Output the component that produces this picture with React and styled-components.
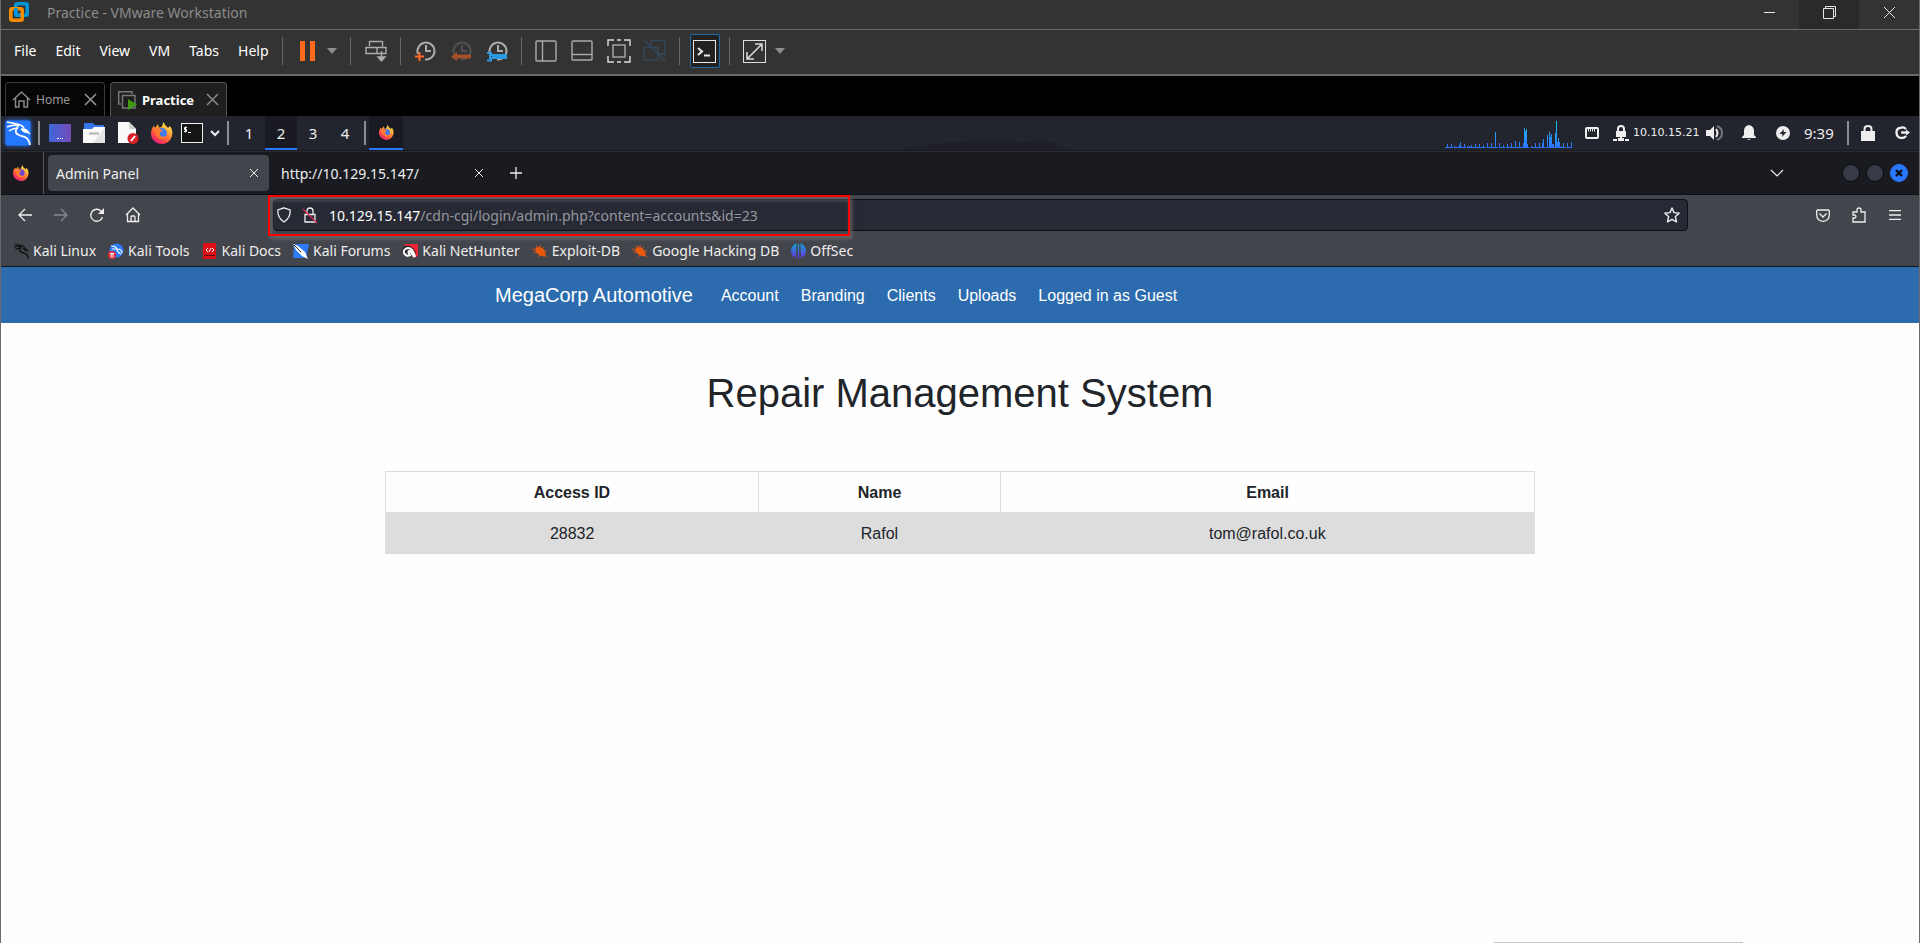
import React from "react";
import styled, { createGlobalStyle, css } from "styled-components";

const ui = '"Noto Sans", "Open Sans", sans-serif';
const page = '"Liberation Sans", Arial, sans-serif';

const GlobalStyle = createGlobalStyle`
  *, *::before, *::after { box-sizing: border-box; }
  body { margin: 0; background: #fefefe; overflow-x: hidden; }
  button, input { border: 0; padding: 0; margin: 0; background: none; color: inherit; font: inherit; }
  a { color: inherit; text-decoration: none; }
  svg { display: block; flex: none; overflow: visible; }
`;

const Window = styled.div`
  display: flex;
  flex-direction: column;
  min-height: 100vh;
  border: solid #6a6a6a;
  border-width: 0 1px;
  font-family: ${ui};
`;

const Spacer = styled.div`flex: 1;`;

/* ---------- VMware window ---------- */
const TitleBar = styled.header`
  display: flex;
  align-items: stretch;
  height: 30px;
  padding-left: 6px;
  background: #333;
  border-bottom: 1px solid #6b6b6b;
  color: #8c8c8c;
  font-size: 14px;
  line-height: 26px;
`;
const TitleText = styled.span`padding-left: 18px;`;
const Caption = styled.button`
  width: 60px;
  padding-bottom: 4px;
  background: ${(p) => (p.$on ? "#2a2a2a" : "none")};
  color: #e6e6e6;
  display: flex;
  align-items: center;
  justify-content: center;
`;
const MenuBar = styled.div`
  display: flex;
  align-items: center;
  height: 46px;
  padding: 0 4px 2px;
  background: #333;
  border-bottom: 2px solid #6b6b6b;
  color: #fff;
  font-size: 14px;
`;
const Menus = styled.div`display: flex; gap: 1px; margin-right: 4px;`;
const MenuItem = styled.button`padding: 0 9px; line-height: 20px;`;
const Divider = styled.span`
  width: 1px;
  height: 28px;
  margin: 0 ${(p) => p.$r}px 0 ${(p) => p.$l}px;
  background: #666;
`;
const Tool = styled.button`
  display: flex;
  align-items: center;
  justify-content: center;
  width: ${(p) => p.$w || 22}px;
  height: 34px;
  margin-right: ${(p) => p.$mr || 0}px;
  color: #ababab;
  ${(p) => p.$on && css`background: #222; border: 1px solid #1f6aa8; border-radius: 2px; color: #e8e8e8;`}
`;
const VmTabs = styled.nav`
  display: flex;
  align-items: flex-end;
  gap: 5px;
  height: 40px;
  padding-left: 4px;
  background: #000;
`;
const VmTab = styled.div`
  display: flex;
  align-items: center;
  gap: 6px;
  width: ${(p) => p.$w}px;
  height: 34px;
  padding: 0 8px 0 7px;
  border: 1px solid ${(p) => (p.$on ? "#555" : "#3a3a3a")};
  border-bottom: 0;
  border-radius: 4px 4px 0 0;
  background: ${(p) => (p.$on ? "#1f1f1f" : "#060606")};
  color: ${(p) => (p.$on ? "#fff" : "#9a9a9a")};
  font-size: ${(p) => (p.$on ? 13 : 12)}px;
  font-weight: ${(p) => (p.$on ? 700 : 400)};
`;
const VmLabel = styled.button`flex: 1; text-align: left;`;

/* ---------- Kali panel ---------- */
const Panel = styled.div`
  position: relative;
  display: flex;
  align-items: center;
  height: 36px;
  padding: 0 9px 2px 4px;
  background: #23252e;
  border-bottom: 1px solid #2b2c30;
  box-shadow: inset 0 -1px #191a1f;
  color: #eee;
  font-size: 15px;
`;
const Wallpaper = styled.svg`
  position: absolute;
  bottom: 1px;
  left: 47%;
`;
const Launcher = styled.button`
  display: flex;
  justify-content: center;
  width: ${(p) => p.$w || 24}px;
  margin-right: ${(p) => p.$mr || 0}px;
`;
const PanelRule = styled.span`
  width: 2px;
  height: 24px;
  margin: 0 ${(p) => p.$r}px 0 ${(p) => p.$l}px;
  background: #8d8e92;
`;
const Workspace = styled.button`
  display: flex;
  align-items: center;
  justify-content: center;
  width: ${(p) => p.$w || 32}px;
  height: 34px;
  border-top: 2px solid transparent;
  border-bottom: 2px solid ${(p) => (p.$on ? "#2777ff" : "transparent")};
  background: ${(p) => (p.$on ? "#1a1b22" : "none")};
`;
const Address = styled.span`
  font-family: "DejaVu Sans", sans-serif;
  font-size: 11px;
  width: 72px;
  white-space: nowrap;
`;
const Clock = styled.time`width: 43px;`;

/* ---------- Firefox ---------- */
const TabStrip = styled.div`
  display: flex;
  align-items: center;
  height: 43px;
  background: #1a1b20;
  border-bottom: 1px solid #0e0f12;
  color: #eee;
  font-size: 14px;
`;
const ViewButton = styled.button`
  display: flex;
  align-items: center;
  justify-content: center;
  width: 43px;
  height: 42px;
  padding-right: 2px;
  margin-right: 4px;
  border-right: 1px solid #55565b;
`;
const BrowserTab = styled.div`
  display: flex;
  align-items: center;
  width: ${(p) => p.$w}px;
  height: 36px;
  padding: 0 11px 0 ${(p) => (p.$on ? 8 : 12)}px;
  border-radius: 4px;
  background: ${(p) => (p.$on ? "#43454c" : "none")};
`;
const TabLabel = styled.button`flex: 1; text-align: left; white-space: nowrap;`;
const NewTab = styled.button`display: flex; padding-left: 16px;`;
const AllTabs = styled.button`display: flex; padding: 0 2px; margin-right: 57px;`;
const WindowDot = styled.button`
  width: 18px;
  height: 18px;
  margin-right: ${(p) => (p.$close ? 11 : 6)}px;
  border-radius: 50%;
  border: 1px solid ${(p) => (p.$close ? "#2777ff" : "#0b0c0f")};
  background: ${(p) => (p.$close ? "#2777ff" : "#373b47")};
  display: flex;
  align-items: center;
  justify-content: center;
`;
const NavBar = styled.div`
  display: flex;
  align-items: center;
  height: 40px;
  padding: 0 16px;
  background: #43454c;
  color: #eee;
`;
const NavButton = styled.button`
  display: flex;
  justify-content: center;
  width: 16px;
  margin-right: ${(p) => (p.$last ? 0 : 20)}px;
  opacity: ${(p) => (p.$dim ? 0.4 : 1)};
`;
const UrlBar = styled.div`
  position: relative;
  flex: 1;
  display: flex;
  align-items: center;
  height: 32px;
  margin: 0 127px 0 132px;
  padding: 0 7px 0 3px;
  border: 1px solid #0e0f14;
  border-radius: 4px;
  background: #272935;
  gap: 11px;
  font-size: 14px;
`;
const UrlText = styled.label`flex: 1; display: flex; color: #fff; white-space: nowrap;`;
const UrlPath = styled.input`flex: 1; min-width: 0; color: #96979d; outline: 0;`;
const RedFrame = styled.span`
  position: absolute;
  top: -5px;
  left: -6px;
  width: 582px;
  height: 41px;
  border: 2px solid #f00;
  box-shadow: 2px 3px 4px rgba(110, 110, 110, 0.8), inset 2px 3px 4px rgba(110, 110, 110, 0.8);
  pointer-events: none;
`;
const Bookmarks = styled.nav`
  display: flex;
  align-items: center;
  gap: 12px;
  height: 32px;
  padding: 0 12px;
  background: #43454c;
  border-bottom: 1px solid #14151a;
  color: #eee;
  font-size: 14px;
`;
const Bookmark = styled.a`display: flex; align-items: center; gap: 4px; white-space: nowrap;`;

/* ---------- Web page ---------- */
const SiteNav = styled.nav`
  display: flex;
  justify-content: center;
  height: 56px;
  background: #2c6cae;
  color: #fff;
  font: 16px/24px ${page};
`;
const SiteInner = styled.div`
  display: flex;
  align-items: center;
  width: 100%;
  max-width: 930px;
  gap: 22px;
`;
const Brand = styled.a`font-size: 20px; margin-right: 6px;`;
const SiteLink = styled.a`padding-top: 2px;`;
const Main = styled.main`
  flex: 1;
  display: flex;
  flex-direction: column;
  align-items: center;
  background: #fefefe;
  color: #212529;
  font: 16px/24px ${page};
`;
const Heading = styled.h1`margin: 46px 0 54px; font-size: 40px; line-height: 48px; font-weight: 500;`;
const Table = styled.table`
  width: 60%;
  border-collapse: collapse;
  text-align: center;
  th, td { padding: 9px 8px 7px; }
  th { border: 1px solid #ddd; }
  td { background: #ddd; }
  tbody { border: 1px solid #ddd; }
`;
const Column = styled.col`width: ${(p) => p.$w};`;
const Toast = styled.aside`
  width: 249px;
  height: 1px;
  margin: auto 176px 0 auto;
  background: #c4c4c4;
`;

/* ---------- Icons ---------- */
const Svg = ({ w = 16, h, sw = 1, children, ...rest }) => (
  <svg width={w} height={h || w} viewBox={`0 0 ${w} ${h || w}`} fill="none" stroke="currentColor" strokeWidth={sw} aria-hidden="true" {...rest}>{children}</svg>
);
const Cross = ({ s = 8, sw = 1, color = "currentColor" }) => (
  <Svg w={s} sw={sw} stroke={color}><path d={`M0 0L${s} ${s}M${s} 0L0 ${s}`} /></Svg>
);
const Caret = () => <Svg w={10} h={6} stroke="none" fill="#8c8c8c"><path d="M0 0H10L5 6z" /></Svg>;
const Chevron = ({ w = 12, sw = 1.2 }) => <Svg w={w} h={w / 2} sw={sw}><path d={`M0 0L${w / 2} ${w / 2}L${w} 0`} /></Svg>;

const VmLogo = () => (
  <Svg w={22} h={24} sw={3.6}>
    <rect x="8.800" y="3.800" width="11.400" height="11.400" rx="1.500" stroke="#0096d6" />
    <rect x="3.800" y="8.800" width="11.400" height="11.400" rx="1.500" stroke="#f38b00" />
    <path d="M8.800 8V13.700Q8.800 15.200 10.300 15.200H13" stroke="#0096d6" />
  </Svg>
);

const FirefoxIcon = ({ s = 22, id }) => (
  <svg width={s} height={s} viewBox="0 0 22 22" aria-hidden="true">
    <defs>
      <linearGradient id={id} x1="0.85" y1="0.05" x2="0.25" y2="1">
        <stop offset="0" stopColor="#fff44f" />
        <stop offset="0.35" stopColor="#ffa436" />
        <stop offset="0.7" stopColor="#ff4f3e" />
        <stop offset="1" stopColor="#e31587" />
      </linearGradient>
    </defs>
    <path d="M13 0C13 3 16 4 17 6L19 4C21 7 22 10 21 14C19.500 19 15.500 22 11 22C5 22 0 17.500 0 11.500C0 8 1.500 5 3 3.500L4 6L7 2L8 5.500Q11 6 11.500 3Q11.700 1 13 0z" fill={`url(#${id})`} />
    <circle cx="11" cy="11" r="5" fill={s !== 16 ? "#3f7cf0" : "#6a46d8"} />
    <path d="M4 7Q7 5.500 9 7.500L12 8Q11 10 9 10Q8 13 11 14.500Q14 15.500 16 13Q14 18 9.500 17Q4 15 4 7z" fill="#ff7a30" />
  </svg>
);

const Dragon = ({ s = 26, color = "#fff", tile }) => (
  <svg width={s} height={s} viewBox="0 0 26 26" fill="none" aria-hidden="true">
    {tile && <rect x="0.500" y="0.500" width="25" height="25" rx="2" fill="#2478ff" style={{ filter: "drop-shadow(0 0 2px #2478ff)" }} />}
    <g stroke={color} strokeLinejoin="round" strokeWidth={tile ? 1.4 : 2}>
      <path d="M2 2L12 4Q17 5 19 8M2 7Q8 4 14 6M4 11Q8 8 13 8" />
      <path d="M13 7Q9 11 12 14Q15 16 20 17Q24 19 25 25" strokeWidth={tile ? 1.8 : 2.4} />
      <path d="M16 9Q20 8 22 10L25 14L22 12.500L19 12Q17 11 16 9z" fill={color} strokeWidth="1" />
    </g>
  </svg>
);

const SystemGraph = () => {
  const spikes = [[2,3],[6,3],[9,1],[14,2],[15,5],[19,3],[22,1],[24,1],[26,2],[30,3],[34,3],[38,2],[42,4],[46,4],[50,15],[54,4],[58,2],[62,3],[66,4],[70,6],[74,5],[78,4],[79,19],[80,16],[81,18],[82,3],[86,1],[90,4],[94,4],[97,4],[98,8],[102,12],[104,15],[105,10],[106,13],[107,3],[108,3],[110,14],[111,26],[112,5],[113,9],[114,5],[116,1],[118,4],[122,4],[126,5]];
  return (
    <svg width="128" height="30" viewBox="0 0 128 30" aria-hidden="true">
      <defs><linearGradient id="load" gradientUnits="userSpaceOnUse" x1="0" y1="2" x2="0" y2="30"><stop stopColor="#1fc8e8" /><stop offset="1" stopColor="#2b72ff" /></linearGradient></defs>
      <path d="M0 29H8V30H0zM10 29H21V30H10zM23 29H41V30H23zM43 29H53V30H43zM54 29H60V30H54zM61 29H84V30H61zM86 29H100V30H86zM101 29H121V30H101zM122 29H127V30H122z" fill="url(#load)" />
      <g fill="url(#load)">{spikes.map(([x, h]) => <rect key={x} x={x} y={29 - h} width="1" height={h + 1} />)}</g>
    </svg>
  );
};

const ClockIcon = ({ dim, children }) => (
  <Svg w={22} sw={2}>
    <path d="M4 14A8.500 8.500 0 1 1 11 19.500" opacity={dim ? 0.25 : 1} />
    <path d="M12 5V11H17" opacity={dim ? 0.25 : 1} />
    {children}
  </Svg>
);

const Bug = () => (
  <Svg stroke="#e8590c" sw={0.8}><path d="M4 5Q8 3 11 6Q14 10 13 13Q7 13 4 9z" fill="#e8590c" /><path d="M0 6L5 7M4 2L6 5M8 2V5M1 9L5 9M6 14L8 12M12 4L10 6M15 8H12M15 14L12 12" /></Svg>
);

const bookmarks = [
  ["Kali Linux", <Dragon s={16} color="#111" />],
  ["Kali Tools", <svg width="16" height="16" viewBox="0 0 16 16"><circle cx="8.500" cy="7.500" r="7" fill="#2d7cf6" /><path d="M3 3Q8 3 9 6Q14 6 14 10M4 6L9 6Q9 9 13 11" fill="none" stroke="#fff" strokeWidth="1.200" /><circle cx="4" cy="12" r="4" fill="#e02a38" /><path d="M2 10.500H6M3.200 10.500V14.500M5 10.500V14.500" stroke="#fff" /></svg>],
  ["Kali Docs", <svg width="16" height="16" viewBox="0 0 16 16"><rect x="1" width="13" height="16" rx="1" fill="#df0f18" /><path d="M2 12.500H13" stroke="#540b0e" /><path d="M6 5L4 7L6 9M7 9L9 5M10 5L12 7L10 9" fill="none" stroke="#fff" /></svg>],
  ["Kali Forums", <svg width="16" height="16" viewBox="0 0 16 16"><path d="M1 1H16L13 15H0z" fill="#2d7cf6" /><path d="M0 1L5 3L12 9L15 16L9 13L3 7z" fill="#fff" /><path d="M1 2L8 9" stroke="#222" /></svg>],
  ["Kali NetHunter", <svg width="16" height="16" viewBox="0 0 16 16"><path d="M2 1H16V13L12 15z" fill="#ee2436" /><path d="M2 10Q2 4 7 5Q10 6 12 11" fill="none" stroke="#222" strokeWidth="4" /><path d="M13 14Q11 5 6 5Q1 6 2 10Q4 14 8 12Q5 8 8 8Q10 10 12 14" fill="none" stroke="#fff" strokeWidth="2" /></svg>],
  ["Exploit-DB", <Bug />],
  ["Google Hacking DB", <Bug />],
  ["OffSec", <svg width="15" height="16" viewBox="0 0 15 16"><defs><linearGradient id="offsec" x2="0" y2="1"><stop stopColor="#13a6d8" /><stop offset="1" stopColor="#6a2bd9" /></linearGradient></defs><path d="M5.500 0Q0 3 0 8Q0 13 5 15zM6.800 1H8.200V16H6.800zM9.500 0Q15 3 15 8Q15 13 10 15z" fill="url(#offsec)" /></svg>],
];

const VmwareChrome = () => (
  <>
    <TitleBar>
      <VmLogo />
      <TitleText>Practice - VMware Workstation</TitleText>
      <Spacer />
      <Caption aria-label="Minimize"><Svg w={11} h={1}><path d="M0 .5H11" /></Svg></Caption>
      <Caption $on aria-label="Restore"><Svg w={13}><path d="M.5 2.500H10.500V12.500H.5zM2.500 2V.5H12.500V10.500H11" /></Svg></Caption>
      <Caption aria-label="Close"><Cross s={11} /></Caption>
    </TitleBar>
    <MenuBar>
      <Menus>
        {["File", "Edit", "View", "VM", "Tabs", "Help"].map((m) => <MenuItem key={m}>{m}</MenuItem>)}
      </Menus>
      <Divider $l={0} $r={14} />
      <Tool $mr={8} aria-label="Suspend"><Svg w={15} h={20} stroke="none" fill="#ff6a1f"><path d="M0 0H5V20H0zM10 0H15V20H10z" /></Svg></Tool>
      <Tool $w={10} aria-label="Power options"><Caret /></Tool>
      <Divider $l={13} $r={14} />
      <Tool aria-label="Send Ctrl+Alt+Del"><Svg w={22} sw={1.4}><path d="M4.500 6V1.500H17.500V6.500M1 7.500H12V13.500H1zM12 7.500H21V13.500H12" /><path d="M16.500 11V20M13 17L16.500 21L20 17z" fill="#ababab" /></Svg></Tool>
      <Divider $l={13} $r={13} />
      <Tool $mr={14} aria-label="Take snapshot"><ClockIcon><path d="M1 16.500H10M5.500 12V21" stroke="#ff6a2a" /></ClockIcon></Tool>
      <Tool $mr={14} aria-label="Revert snapshot"><ClockIcon dim><path d="M6 16.500H21" stroke="#a5502b" strokeWidth="4" /><path d="M7 12L1 16.500L7 21z" fill="#a5502b" stroke="none" /></ClockIcon></Tool>
      <Tool aria-label="Manage snapshots"><ClockIcon><path d="M6 16.500H21" stroke="#2c9ae0" strokeWidth="5" /><path d="M1 13H5V15H4V18H5V20.500H1" stroke="#2c9ae0" /></ClockIcon></Tool>
      <Divider $l={13} $r={13} />
      <Tool $mr={14} aria-label="Library"><Svg w={22} sw={1.4}><rect x="1" y="1" width="20" height="20" rx="1" /><path d="M7.500 1V21" /></Svg></Tool>
      <Tool $mr={14} aria-label="Thumbnail bar"><Svg w={22} sw={1.4}><rect x="1" y="1" width="20" height="19" rx="1" /><path d="M1 14.500H21" /></Svg></Tool>
      <Tool $w={24} $mr={12} aria-label="Full screen"><Svg w={24} sw={1.4}><rect x="6" y="6" width="12" height="12" /><path d="M1 7V1H7M10 1H14M17 1H23V7M23 17V23H17M14 23H10M7 23H1V17" stroke="#ddd" /></Svg></Tool>
      <Tool $w={24} aria-label="Unity"><Svg w={24} stroke="#33485a" sw={1.4}><path d="M1 8.500H15V21H1zM8 8V1.500H22V15H15M0 0L23 23" /></Svg></Tool>
      <Divider $l={12} $r={10} />
      <Tool $on $w={30} aria-label="Console view"><Svg w={23}><rect x=".5" y=".5" width="22" height="22" /><path d="M5 8L9 11.500L5 15M11 15.500H17" strokeWidth="2" /></Svg></Tool>
      <Divider $l={9} $r={9} />
      <Tool $w={32} aria-label="Stretch guest"><Svg w={23} stroke="#ddd"><rect x=".5" y=".5" width="22" height="22" /><path d="M5 18L18 5M4 12V19H11M12 4H19V11" strokeWidth="1.500" /></Svg></Tool>
      <Tool $w={18} aria-label="Display options"><Caret /></Tool>
    </MenuBar>
    <VmTabs>
      <VmTab $w={100}>
        <Svg w={17} sw={1.5} stroke="#888"><path d="M0 9L8.500 1L17 9M2.500 7V16H6V10H11V16H14.500V7" /></Svg>
        <VmLabel>Home</VmLabel>
        <Cross s={11} sw={1.5} color="#999" />
      </VmTab>
      <VmTab $on $w={117}>
        <Svg w={18} sw={1.5} stroke="#777"><path d="M3 13H.7V.7H14V3M4.500 4.500H17V17H4.500z" /><path d="M10 8L19 13.500L10 19z" fill="#3f9a12" stroke="none" /></Svg>
        <VmLabel>Practice</VmLabel>
        <Cross s={11} sw={1.5} color="#888" />
      </VmTab>
    </VmTabs>
  </>
);

const KaliPanel = () => (
  <Panel>
    <Wallpaper width="182" height="10" viewBox="0 0 182 10" aria-hidden="true"><path d="M0 10Q40 0 100 1L120 2L142 1L156 4L164 9L182 10z" fill="#1e1f27" /></Wallpaper>
    <Launcher $w={26} aria-label="Applications"><Dragon tile /></Launcher>
    <PanelRule $l={7} $r={8} />
    <Launcher $mr={10} aria-label="Show desktop"><svg width="22" height="18" viewBox="0 0 22 18"><defs><linearGradient id="desk"><stop stopColor="#3c68da" /><stop offset="1" stopColor="#764bb8" /></linearGradient></defs><rect width="22" height="18" rx="1" fill="url(#desk)" /><path d="M8 14.500H10M11 14.500H12M13 14.500H14" stroke="#fff" /></svg></Launcher>
    <Launcher $mr={10} aria-label="Files"><svg width="22" height="20" viewBox="0 0 22 20"><path d="M1 0H10L12 2H21V8H1z" fill="#3575ea" /><path d="M0 6H9L11 4H22V20H0z" fill="#fafafa" /><path d="M22 4V20H10z" fill="#e4e4e4" /><path d="M6 10.500H16" stroke="#b0b0b0" strokeWidth="2" /></svg></Launcher>
    <Launcher $mr={10} aria-label="Text editor"><svg width="20" height="23" viewBox="0 0 20 23"><path d="M0 1H11L18 8V22H0z" fill="#fafafa" /><path d="M11 1V8H18z" fill="#d0d0d0" /><circle cx="15" cy="17.500" r="5.500" fill="#d9202a" /><path d="M13 20L17 15" stroke="#fff" strokeWidth="2" /></svg></Launcher>
    <Launcher $mr={6} aria-label="Firefox"><FirefoxIcon id="ff-launch" /></Launcher>
    <Launcher aria-label="Terminal"><svg width="22" height="20" viewBox="0 0 22 20"><rect x=".5" y=".5" width="21" height="19" fill="#151515" stroke="#eee" /><path d="M6 4.500H3.500V6.500H5.500V8.500H3M4.500 3.500V9.500M7 9.500H10" stroke="#fff" fill="none" /></svg></Launcher>
    <Launcher $w={22} aria-label="More terminals"><Chevron w={8} sw={2} /></Launcher>
    <PanelRule $l={1} $r={4} />
    {["1", "2", "3", "4"].map((n) => <Workspace key={n} $on={n === "2"}>{n}</Workspace>)}
    <PanelRule $l={3} $r={3} />
    <Workspace $on $w={34} aria-label="Firefox window"><FirefoxIcon s={15} id="ff-task" /></Workspace>
    <Spacer />
    <SystemGraph />
    <Launcher $w={38} aria-label="Wired network"><Svg w={14} h={12} sw={2}><rect x="1" y="1" width="12" height="10" rx="1" /><path d="M3 3H11" strokeDasharray="1 1" strokeWidth="3" /></Svg></Launcher>
    <Launcher $w={20} $mr={2} aria-label="VPN"><Svg w={16} fill="currentColor" stroke="none"><path d="M3 6H13V12H9V13H11V16H5V13H7V12H3zM0 14H4V16H0zM12 14H16V16H12z" /><path d="M5 7V4Q5 1 8 1Q11 1 11 4V7" fill="none" stroke="currentColor" strokeWidth="2" /></Svg></Launcher>
    <Address>10.10.15.21</Address>
    <Launcher $w={18} $mr={19} aria-label="Volume"><Svg w={17} h={16} sw={2}><path d="M0 5H4L8 1V15L4 11H0z" fill="currentColor" stroke="none" /><path d="M10 4Q13 8 10 12" /><path d="M11 1Q16 3 16 8Q16 13 11 15" opacity=".4" /></Svg></Launcher>
    <Launcher $w={14} $mr={20} aria-label="Notifications"><Svg w={14} h={15} fill="currentColor" stroke="none"><path d="M0 13V12L2 10V6Q2 1 7 0Q12 1 12 6V10L14 12V13zM5 14H9L7 15z" /></Svg></Launcher>
    <Launcher $w={14} $mr={14} aria-label="Power manager"><Svg w={14} stroke="none" fill="currentColor"><circle cx="7" cy="7" r="7" /><path d="M8 3L3.500 8H6.500L6 11L10.500 6H7.500z" fill="#23252e" /></Svg></Launcher>
    <Clock>9:39</Clock>
    <PanelRule $l={0} $r={12} />
    <Launcher $w={14} $mr={20} aria-label="Lock screen"><Svg w={14} h={16} sw={2}><rect x="1" y="7" width="12" height="8" fill="currentColor" /><path d="M3.500 7V4Q3.500 1 7 1Q10.500 1 10.500 4V7" /></Svg></Launcher>
    <Launcher $w={15} aria-label="Log out"><Svg w={15} h={13} sw={2.4}><path d="M11 3Q9 1 6.500 1.500Q1 2 1.500 7Q2 12 7 12Q9.500 12 11 10" /><path d="M6 6.500H12" /><path d="M11 3.500L15 6.500L11 9.500z" fill="currentColor" stroke="none" /></Svg></Launcher>
  </Panel>
);

const Browser = () => (
  <>
    <TabStrip>
      <ViewButton aria-label="Firefox View"><FirefoxIcon s={16} id="ff-view" /></ViewButton>
      <BrowserTab $on $w={221}><TabLabel>Admin Panel</TabLabel><Cross /></BrowserTab>
      <BrowserTab $w={225}><TabLabel>http://10.129.15.147/</TabLabel><Cross /></BrowserTab>
      <NewTab aria-label="New tab"><Svg w={12} sw={1.3}><path d="M6 0V12M0 6H12" /></Svg></NewTab>
      <Spacer />
      <AllTabs aria-label="List all tabs"><Chevron /></AllTabs>
      <WindowDot aria-label="Minimize" />
      <WindowDot aria-label="Maximize" />
      <WindowDot $close aria-label="Close"><Svg w={6} sw={2.4} stroke="#0b0c12"><path d="M0 0L6 6M6 0L0 6" /></Svg></WindowDot>
    </TabStrip>
    <NavBar>
      <NavButton aria-label="Back"><Svg w={14} sw={1.3}><path d="M14 7H1M7 1L1 7L7 13" /></Svg></NavButton>
      <NavButton $dim aria-label="Forward"><Svg w={14} sw={1.3}><path d="M0 7H13M7 1L13 7L7 13" /></Svg></NavButton>
      <NavButton aria-label="Reload"><Svg w={14} sw={1.3}><path d="M12.500 9A6 6 0 1 1 11 3L13 5" /><path d="M14 0V6H8z" fill="currentColor" stroke="none" /></Svg></NavButton>
      <NavButton $last aria-label="Home"><Svg w={16} sw={1.3}><path d="M1 8L8 1L15 8M2.500 7V14.500H13.500V7M6 14V10Q6 9 7 9H9Q10 9 10 10V14" /></Svg></NavButton>
      <UrlBar>
        <Svg w={14} h={16} sw={1.3}><path d="M7 .8L13.200 3Q13.500 11 7 15Q.5 11 .8 3z" /></Svg>
        <Svg w={16} sw={1.3}><path d="M3 7.500H13V15H3zM5 7V4Q5 1 8 1Q11 1 11 4V7" /><path d="M1 2L15 16" stroke="#e22850" /></Svg>
        <UrlText htmlFor="url">10.129.15.147<UrlPath id="url" defaultValue="/cdn-cgi/login/admin.php?content=accounts&amp;id=23" /></UrlText>
        <Svg w={16} sw={1.4}><path strokeLinejoin="round" d="M8 1L10 5.600L15.200 6.200L11.400 9.600L12.500 15L8 12.300L3.500 15L4.600 9.600L.8 6.200L6 5.600z" /></Svg>
        <RedFrame />
      </UrlBar>
      <NavButton aria-label="Save to Pocket"><Svg w={14} h={13} sw={1.3}><path d="M1.500 1H12.500Q13.300 1 13.300 2V6Q13 12 7 12.300Q1 12 .7 6V2Q.7 1 1.500 1zM3.500 4.500L7 8L10.500 4.500" /></Svg></NavButton>
      <NavButton aria-label="Extensions"><Svg w={14} h={16} sw={1.3}><path d="M1 15V11H3Q5 9.500 3 8H1V5H5V3Q5 1 7 1Q9 1 9 3V5H13V15z" /></Svg></NavButton>
      <NavButton $last aria-label="Menu"><Svg w={12} h={10} sw={1.3}><path d="M0 .7H12M0 5H12M0 9.300H12" /></Svg></NavButton>
    </NavBar>
    <Bookmarks>
      {bookmarks.map(([name, icon]) => <Bookmark key={name} href="#">{icon}{name}</Bookmark>)}
    </Bookmarks>
  </>
);

const Site = () => (
  <>
    <SiteNav>
      <SiteInner>
        <Brand href="#">MegaCorp Automotive</Brand>
        {["Account", "Branding", "Clients", "Uploads", "Logged in as Guest"].map((l) => <SiteLink key={l} href="#">{l}</SiteLink>)}
      </SiteInner>
    </SiteNav>
    <Main>
      <Heading>Repair Management System</Heading>
      <Table>
        <colgroup><Column $w="32.5%" /><Column $w="21%" /><Column $w="46.5%" /></colgroup>
        <thead><tr><th>Access ID</th><th>Name</th><th>Email</th></tr></thead>
        <tbody><tr><td>28832</td><td>Rafol</td><td>tom@rafol.co.uk</td></tr></tbody>
      </Table>
      <Toast />
    </Main>
  </>
);

export default function App() {
  return (
    <Window>
      <GlobalStyle />
      <VmwareChrome />
      <KaliPanel />
      <Browser />
      <Site />
    </Window>
  );
}
